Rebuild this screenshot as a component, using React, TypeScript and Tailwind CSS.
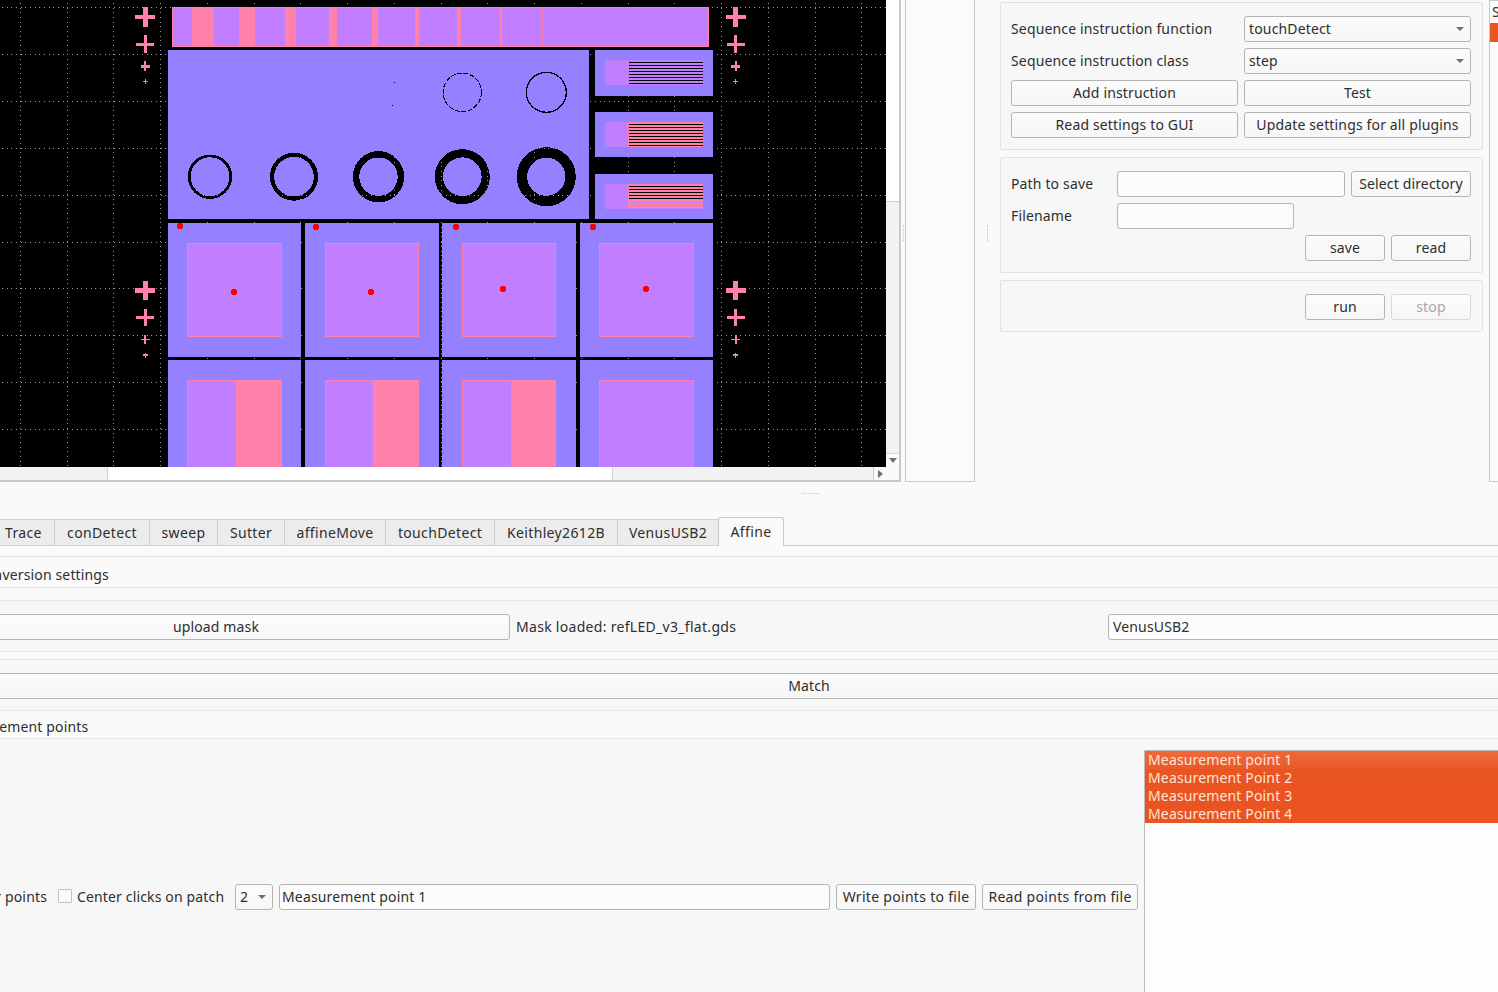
import React from "react";

const FONT = "font-['Noto_Sans','Open_Sans',sans-serif]";
const BLUE = "#9580ff";
const PURPLE = "#c17fff";
const PINK = "#ff80a8";
const RED = "#ff0000";

type C = { x: number; w: number; vx: number; vw: number; y: number; h: number; hy: number; ht: number };

function Cross({ x, w, vx, vw, y, h, hy, ht }: C) {
  return (
    <g fill={PINK}>
      <rect x={vx} y={y} width={vw} height={h} />
      <rect x={x} y={hy} width={w} height={ht} />
    </g>
  );
}

function Mask() {
  const gridX: number[] = [];
  for (let x = 19.75; x < 886; x += 46.75) gridX.push(Math.round(x));
  const gridY: number[] = [];
  for (let y = 7; y < 467; y += 46.9) gridY.push(Math.round(y));
  let dotsPath = "";
  for (const y of gridY) for (let x = 2; x < 886; x += 4.67) dotsPath += `M${Math.round(x)} ${y}h1v1h-1z`;
  for (const x of gridX) for (let y = 3; y < 467; y += 4.67) dotsPath += `M${x} ${Math.round(y)}h1v1h-1z`;

  const cols = [
    [
      { x: 135, w: 20, vx: 143, vw: 5 },
      { x: 136, w: 18, vx: 144, vw: 3 },
      { x: 141, w: 9, vx: 144, vw: 2 },
      { x: 143, w: 5, vx: 145, vw: 1 },
    ],
    [
      { x: 726, w: 20, vx: 733, vw: 5 },
      { x: 727, w: 18, vx: 734, vw: 3 },
      { x: 731, w: 9, vx: 735, vw: 2 },
      { x: 733, w: 5, vx: 735, vw: 1 },
    ],
  ];
  const rows = [
    { y: 7, h: 20, hy: 15, ht: 4 },
    { y: 35, h: 18, hy: 43, ht: 3 },
    { y: 61, h: 10, hy: 65, ht: 3 },
    { y: 79, h: 5, hy: 81, ht: 1 },
    { y: 281, h: 19, hy: 288, ht: 5 },
    { y: 309, h: 17, hy: 316, ht: 3 },
    { y: 335, h: 9, hy: 339, ht: 1 },
    { y: 353, h: 5, hy: 354, ht: 2 },
  ];
  const topPink = [
    [192, 21.5],
    [239, 16],
    [285, 11],
    [329, 8],
    [372, 6],
    [415, 4],
    [457, 4],
    [500, 2],
    [542, 1],
  ];
  const cellsX = [
    [168, 133],
    [305, 134],
    [442, 134],
    [580, 133],
  ];
  const inner = [
    [187, 95],
    [325, 94],
    [462, 94],
    [599, 95],
  ];
  const pinkLower = [
    [236, 46],
    [373, 46],
    [511, 45],
  ];
  const dots = [
    [180, 226],
    [316, 227],
    [456, 227],
    [593, 227],
    [234, 292],
    [371, 292],
    [503, 289],
    [646, 289],
  ];
  const rings = [
    [210, 176.7, 20.8, 2.8],
    [294, 176.7, 21.9, 4.2],
    [378.5, 176.7, 22.4, 6.4],
    [462.3, 176.7, 23.4, 8.2],
    [546.3, 176.7, 24.3, 10.4],
  ];
  const stripes = (y0: number, count: number) => Array.from({ length: count }, (_, i) => y0 + i * 3);
  return (
    <svg width={886} height={467} viewBox="0 0 886 467" shapeRendering="crispEdges" className="block shrink-0">
      <defs>
        <mask id="holes" maskUnits="userSpaceOnUse" x="0" y="0" width="886" height="467">
          <rect x="0" y="0" width="886" height="467" fill="#fff" />
          {rings.map(([cx, cy, r, s], i) => (
            <circle key={i} cx={cx} cy={cy} r={r} fill="none" stroke="#000" strokeWidth={s} />
          ))}
          <circle cx="462.3" cy="92.3" r="19.2" fill="none" stroke="#000" strokeWidth="1" strokeDasharray="5 1.5" />
          <circle cx="546.3" cy="92.3" r="20" fill="none" stroke="#000" strokeWidth="1.3" />
        </mask>
      </defs>
      <rect width="886" height="467" fill="#000" />
      <path d={dotsPath} fill="#9a9a9a" />

      {/* top bar */}
      <rect x="172" y="7" width="537" height="40" fill={PINK} />
      <rect x="173" y="8" width="535" height="38" fill={PURPLE} />
      {topPink.map(([x, w]) => (
        <rect key={x} x={x} y="7" width={w} height="40" fill={PINK} />
      ))}

      <g mask="url(#holes)">
        <rect x="168" y="50" width="421" height="169" fill={BLUE} />
      </g>
      <rect x="394" y="82" width="1" height="1" fill="#000" />
      <rect x="392" y="105" width="1" height="1" fill="#000" />

      {/* side blocks */}
      {[
        [50, 46, 60],
        [112, 45, 122],
        [174, 45, 184],
      ].map(([y, h, iy], b) => (
        <g key={y}>
          <rect x="595" y={y} width="118" height={h} fill={BLUE} />
          <rect x="605" y={iy} width="98" height="25" fill={PURPLE} />
          {b > 0 && <rect x="628" y={iy} width="75" height="25" fill={PINK} />}
          {stripes(iy + 2, b === 2 ? 5 : 8).map((sy) => (
            <rect key={sy} x="629" y={sy} width="74" height="1" fill="#000" />
          ))}
          {b === 2 &&
            stripes(iy + 18, 3).map((sy) => <rect key={sy} x="628" y={sy} width="75" height="1" fill={PURPLE} />)}
        </g>
      ))}

      {/* cells */}
      {cellsX.map(([x, w], i) => (
        <g key={x}>
          <rect x={x} y="223" width={w} height="134" fill={BLUE} />
          <rect x={x} y="360" width={w} height="107" fill={BLUE} />
          <rect x={inner[i][0]} y="243" width={inner[i][1]} height="94" fill={PINK} />
          <rect x={inner[i][0] + 1} y="244" width={inner[i][1] - 2} height="92" fill={PURPLE} />
          <rect x={inner[i][0]} y="380" width={inner[i][1]} height="87" fill={PINK} />
          <rect x={inner[i][0] + 1} y="381" width={inner[i][1] - 2} height="86" fill={PURPLE} />
          {pinkLower[i] && <rect x={pinkLower[i][0]} y="380" width={pinkLower[i][1]} height="87" fill={PINK} />}
        </g>
      ))}

      {dots.map(([x, y]) => (
        <circle key={x} cx={x} cy={y} r="3.2" fill={RED} />
      ))}

      {cols.map((col, ci) =>
        rows.map((r, ri) => <Cross key={ci + "-" + ri} {...col[ri % 4]} {...r} />)
      )}
    </svg>
  );
}

function Btn({ children, className = "", disabled = false }: { children: React.ReactNode; className?: string; disabled?: boolean }) {
  return (
    <div
      className={
        "h-[26px] shrink-0 flex items-center justify-center rounded-[3px] border pb-[2px] bg-linear-to-b from-[#fcfcfc] to-[#f6f6f6] " +
        (disabled ? "border-[#d8d8d8] text-[#a8a8a8] " : "border-[#b4b4b4] text-[#2e2e2e] ") +
        className
      }
    >
      {children}
    </div>
  );
}

function Arrow() {
  return <span className="w-0 h-0 border-x-[4px] border-x-transparent border-t-[4px] border-t-[#707070]" />;
}

function Combo({ children, className = "" }: { children: React.ReactNode; className?: string }) {
  return (
    <div className={"h-[26px] shrink-0 flex items-center justify-between rounded-[3px] border border-[#b4b4b4] bg-linear-to-b from-[#fcfcfc] to-[#f6f6f6] pl-[4px] pr-[6px] " + className}>
      <span className="pb-[2px]">{children}</span>
      <Arrow />
    </div>
  );
}

function Field({ children, className = "" }: { children?: React.ReactNode; className?: string }) {
  return (
    <div className={"h-[26px] shrink-0 flex items-center rounded-[3px] border border-[#b4b4b4] bg-[#fcfcfc] px-[2px] pb-[2px] " + className}>{children}</div>
  );
}

function GroupBox({ children, className = "" }: { children: React.ReactNode; className?: string }) {
  return <div className={"border border-[#e2e2e2] rounded-[2px] bg-[#f7f7f7] pl-[10px] pr-[11px] " + className}>{children}</div>;
}

const TABS: [string, string][] = [
  ["conDetect", "w-[95px]"],
  ["sweep", "w-[68px]"],
  ["Sutter", "w-[67px]"],
  ["affineMove", "w-[101px]"],
  ["touchDetect", "w-[109px]"],
  ["Keithley2612B", "w-[123px]"],
  ["VenusUSB2", "w-[101px]"],
];

export default function App() {
  return (
    <div className={"w-[1498px] h-[992px] overflow-hidden bg-[#fafafa] text-[14px] text-[#2e2e2e] tracking-[0.15px] " + FONT}>
      {/* top */}
      <div className="flex h-[482px]">
        <div className="w-[901px] shrink-0 border-r-2 border-b-2 border-[#c8c8c8] flex flex-col">
          <div className="flex h-[467px]">
            <Mask />
            <div className="w-[13px] flex flex-col bg-[#f2f2f2]">
              <div className="h-[202px] bg-white border-b border-[#cfcfcf]" />
              <div className="flex-1" />
              <div className="h-[14px] flex items-center justify-center bg-[#fafafa] border-t border-[#d8d8d8]">
                <span className="w-0 h-0 border-x-[4px] border-x-transparent border-t-[5px] border-t-[#707070]" />
              </div>
            </div>
          </div>
          <div className="flex h-[13px]">
            <div className="w-[108px] bg-[#f2f2f2] border-r border-[#cfcfcf]" />
            <div className="w-[505px] bg-white border-r border-[#cfcfcf]" />
            <div className="w-[260px] bg-[#f2f2f2]" />
            <div className="w-[13px] flex items-center justify-center bg-[#fafafa] border-l border-[#cfcfcf]">
              <span className="w-0 h-0 border-y-[4px] border-y-transparent border-l-[5px] border-l-[#707070]" />
            </div>
            <div className="flex-1 bg-[#fafafa]" />
          </div>
        </div>
        <div className="w-[4px] flex items-center justify-center">
          <div className="h-[16px] w-px mt-[-16px] border-l border-dotted border-[#c4c4c4]" />
        </div>
        <div className="w-[70px] shrink-0 bg-[#fcfcfc] border-x border-b border-[#c8c8c8]" />
        <div className="w-[25px] shrink-0 flex items-center justify-center">
          <div className="h-[16px] w-px mt-[-16px] border-l border-dotted border-[#c4c4c4]" />
        </div>
        <div className="w-[483px] shrink-0 flex flex-col gap-[7px] pt-[2px]">
          <GroupBox className="h-[148px] pt-[13px] flex flex-col gap-[6px]">
            <div className="flex items-center justify-between">
              <span className="pb-[2px]">Sequence instruction function</span>
              <Combo className="w-[227px]">touchDetect</Combo>
            </div>
            <div className="flex items-center justify-between">
              <span className="pb-[2px]">Sequence instruction class</span>
              <Combo className="w-[227px]">step</Combo>
            </div>
            <div className="flex justify-between">
              <Btn className="w-[227px]">Add instruction</Btn>
              <Btn className="w-[227px]">Test</Btn>
            </div>
            <div className="flex justify-between">
              <Btn className="w-[227px]">Read settings to GUI</Btn>
              <Btn className="w-[227px]">Update settings for all plugins</Btn>
            </div>
          </GroupBox>
          <GroupBox className="h-[116px] pt-[13px] flex flex-col gap-[6px]">
            <div className="flex items-center">
              <span className="w-[106px] pb-[2px]">Path to save</span>
              <Field className="w-[228px]" />
              <Btn className="w-[120px] ml-[6px]">Select directory</Btn>
            </div>
            <div className="flex items-center">
              <span className="w-[106px] pb-[2px]">Filename</span>
              <Field className="w-[177px]" />
            </div>
            <div className="flex justify-end gap-[6px]">
              <Btn className="w-[80px]">save</Btn>
              <Btn className="w-[80px]">read</Btn>
            </div>
          </GroupBox>
          <GroupBox className="h-[52px] pt-[13px]">
            <div className="flex justify-end gap-[6px]">
              <Btn className="w-[80px]">run</Btn>
              <Btn className="w-[80px]" disabled>
                stop
              </Btn>
            </div>
          </GroupBox>
        </div>
        <div className="w-[6px] shrink-0" />
        <div className="flex-1 border-l border-t border-b border-[#c8c8c8] bg-[#fcfcfc] overflow-hidden">
          <div className="h-[22px] pl-[2px] leading-[22px]">Sequence</div>
          <div className="h-[19px] bg-[#e95420]" />
        </div>
      </div>

      {/* splitter */}
      <div className="h-[35px] flex justify-center pt-[11px]">
        <div className="w-[17px] h-px ml-[122px] border-t border-dotted border-[#c4c4c4]" />
      </div>

      {/* tabs */}
      <div className="flex h-[29px] items-end tracking-[0.35px]">
        <div className="w-[55px] h-[27px] shrink-0 flex items-center pl-[5px] bg-[#ececec] border-t border-r border-b border-[#d0d0d0]">Trace</div>
        {TABS.map(([t, w]) => (
          <div key={t} className={"h-[27px] shrink-0 flex items-center justify-center bg-[#ececec] border-t border-r border-b border-[#d0d0d0] " + w}>
            {t}
          </div>
        ))}
        <div className="w-[66px] h-[29px] shrink-0 flex items-center justify-center pb-[2px] bg-[#fafafa] border-t border-x border-[#c8c8c8] rounded-t-[3px] -ml-px">Affine</div>
        <div className="flex-1 border-b border-[#c8c8c8]" />
      </div>

      {/* pane */}
      <div className="-ml-[80px] w-[1778px]">
        <div className="h-[10px]" />
        <div className="h-[32px] border-y border-[#dcdcdc] border-b-[#e6e6e6] bg-[#fafafa] flex items-center pl-[56px] pt-[5px]">Conversion settings</div>
        <div className="h-[12px]" />
        <div className="h-[52px] border-y border-[#e6e6e6] bg-[#f7f7f7] flex items-center pl-[2px] pt-[1px]">
          <Btn className="w-[588px] rounded-[3px] !pb-px">upload mask</Btn>
          <span className="ml-[6px] w-[592px] pb-px tracking-[0.3px]">Mask loaded: refLED_v3_flat.gds</span>
          <Field className="flex-1 pl-[4px] mr-[2px] !pb-px">VenusUSB2</Field>
        </div>
        <div className="h-[7px]" />
        <div className="h-[51px] border-t border-[#e6e6e6] bg-[#f7f7f7] pt-[13px] pl-[2px] pr-[2px]">
          <Btn className="w-full">Match</Btn>
        </div>
        <div className="h-[29px] border-y border-[#e6e6e6] bg-[#fafafa] flex items-center pl-[29px] pt-[4px]">Measurement points</div>
        <div className="h-[254px] bg-[#f7f7f7] flex">
          <div className="w-[1224px] shrink-0 pt-[145px] flex items-start">
            <div className="h-[26px] w-[127px] shrink-0 flex items-center justify-end pb-[2px]">Clear points</div>
            <span className="ml-[11px] w-[14px] h-[14px] mt-[5px] shrink-0 border border-[#c0c0c0] bg-[#fbfbfb] rounded-[1px]" />
            <span className="ml-[5px] h-[26px] flex items-center w-[158px] shrink-0 pb-[2px]">Center clicks on patch</span>
            <Combo className="w-[38px]">2</Combo>
            <Field className="w-[551px] ml-[6px]">Measurement point 1</Field>
            <Btn className="w-[140px] ml-[6px] tracking-[0.3px]">Write points to file</Btn>
            <Btn className="w-[156px] ml-[6px] tracking-[0.3px]">Read points from file</Btn>
          </div>
          <div className="flex-1 mt-[11px] border-t border-l border-[#bcbcbc] bg-[#fdfdfd] text-[#ffe4dc]">
            {["Measurement point 1", "Measurement Point 2", "Measurement Point 3", "Measurement Point 4"].map((t, i) => (
              <div key={t} className={"h-[18px] leading-[17px] pl-[3px] " + (i === 0 ? "bg-linear-to-b from-[#ee6a3a] to-[#e95a28]" : "bg-[#e95420]")}>
                {t}
              </div>
            ))}
          </div>
        </div>
      </div>
    </div>
  );
}
